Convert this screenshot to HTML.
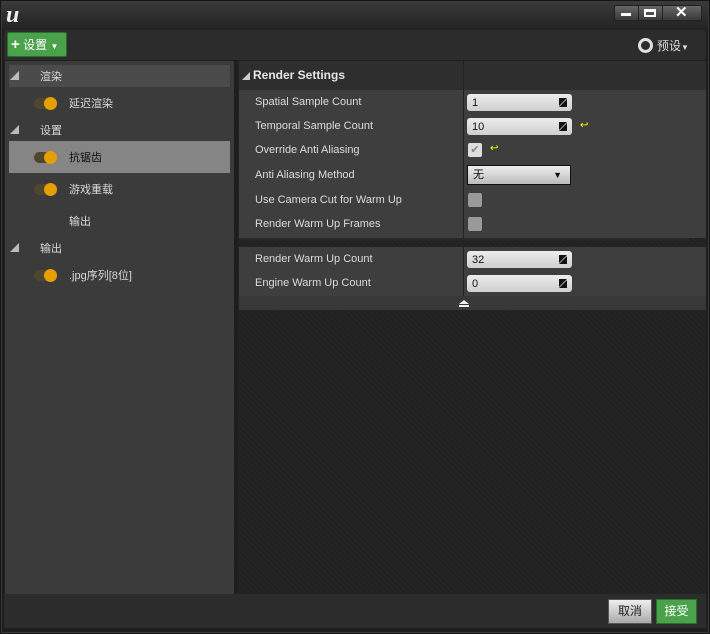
<!DOCTYPE html><html><head><meta charset="utf-8"><style>
*{margin:0;padding:0;box-sizing:border-box}
body{width:710px;height:634px;background:#151515;font-family:"Liberation Sans","Noto Sans CJK SC",sans-serif;font-size:11px;color:#d8d8d8;position:relative;overflow:hidden}
.a{position:absolute;white-space:nowrap}
.tog{position:absolute;width:22px;height:11px;border-radius:6px;background:#4f4630}
.tog:after{content:"";position:absolute;right:-1px;top:-1px;width:13px;height:13px;border-radius:50%;background:#e5a000}
.lbl{position:absolute;left:255px;color:#dcdcdc;white-space:nowrap}
.inp{position:absolute;left:467px;width:105px;height:17px;border-radius:3px;background:linear-gradient(#ececec,#cfcfcf);color:#111;padding-left:5px;line-height:18px}
.inp:after{content:"";position:absolute;right:5px;top:4px;width:0;height:0;border-top:4px solid #111;border-left:4px solid #111;border-right:4px solid transparent;border-bottom:4px solid transparent}
.inp:before{content:"";position:absolute;right:5px;top:5px;width:0;height:0;border-bottom:4px solid #111;border-right:4px solid #111;border-left:4px solid transparent;border-top:4px solid transparent}
.cb{position:absolute;left:468px;width:14px;height:14px;border-radius:2px;background:#9a9a9a}
.rst{position:absolute;color:#ff0;font-size:10px}
</style></head><body>
<div class="a" style="left:1px;top:1px;width:708px;height:632px;background:#1e1e1e;border:1px solid #3a3a3a"></div>
<div class="a" style="left:2px;top:2px;width:706px;height:28px;background:linear-gradient(#3a3a3a,#222)"></div>
<div class="a" style="left:6px;top:2px;font-family:'Liberation Serif',serif;font-size:24px;font-weight:bold;color:#eee;font-style:italic">u</div>
<div class="a" style="left:614px;top:5px;width:88px;height:16px;background:linear-gradient(#666,#3a3a3a);border:1px solid #222;border-radius:2px"></div>
<div class="a" style="left:638px;top:5px;width:1px;height:16px;background:#222"></div>
<div class="a" style="left:662px;top:5px;width:1px;height:16px;background:#222"></div>
<div class="a" style="left:621px;top:13px;width:10px;height:3px;background:#fff"></div>
<div class="a" style="left:644px;top:9px;width:12px;height:8px;border:2px solid #fff;border-top-width:3px"></div>
<div class="a" style="left:675px;top:3px;color:#fff;font-size:15px;font-weight:bold">✕</div>
<div class="a" style="left:4px;top:30px;width:702px;height:30px;background:#2c2c2c;border-radius:3px"></div>
<div class="a" style="left:7px;top:32px;width:60px;height:25px;background:#4aa24a;border:1px solid #2c6c2c;border-radius:2px;color:#fff;font-size:12px;line-height:23px;padding-left:3px"><b style="font-size:15px">+</b> 设置 <span style="font-size:8px">▼</span></div>
<div class="a" style="left:638px;top:38px;width:15px;height:15px;border-radius:50%;border:3px solid #e0e0e0"></div>
<div class="a" style="left:657px;top:37px;color:#ddd;font-size:12px">预设<span style="font-size:8px">▼</span></div>
<div class="a" style="left:5px;top:61px;width:229px;height:533px;background:#3b3b3b"></div>
<div class="a" style="left:9px;top:65px;width:221px;height:22px;background:#4b4b4b"></div>
<div class="a" style="left:10px;top:69px;color:#bbb;font-size:9px">◢</div><div class="a" style="left:40px;top:68px">渲染</div>
<div class="tog" style="left:34px;top:98px"></div><div class="a" style="left:69px;top:95px">延迟渲染</div>
<div class="a" style="left:10px;top:123px;color:#bbb;font-size:9px">◢</div><div class="a" style="left:40px;top:122px">设置</div>
<div class="a" style="left:9px;top:141px;width:221px;height:32px;background:#858585"></div>
<div class="tog" style="left:34px;top:152px"></div><div class="a" style="left:69px;top:149px;color:#111">抗锯齿</div>
<div class="tog" style="left:34px;top:184px"></div><div class="a" style="left:69px;top:181px">游戏重载</div>
<div class="a" style="left:69px;top:213px">输出</div>
<div class="a" style="left:10px;top:241px;color:#bbb;font-size:9px">◢</div><div class="a" style="left:40px;top:240px">输出</div>
<div class="tog" style="left:34px;top:270px"></div><div class="a" style="left:69px;top:267px">.jpg序列[8位]</div>
<div class="a" style="left:238px;top:61px;width:468px;height:533px;background:repeating-linear-gradient(45deg,#242424 0 2px,#212121 2px 4px)"></div>
<div class="a" style="left:239px;top:61px;width:467px;height:29px;background:#2e2e2e"></div>
<div class="a" style="left:242px;top:71px;color:#ccc;font-size:8px">◢</div>
<div class="a" style="left:253px;top:68px;font-size:12px;font-weight:bold;color:#e6e6e6">Render Settings</div>
<div class="a" style="left:239px;top:90px;width:467px;height:148px;background:#3e3e3e"></div>
<div class="a" style="left:239px;top:238px;width:450px;height:4px;background:linear-gradient(#2a2a2a,transparent)"></div>
<div class="a" style="left:239px;top:247px;width:467px;height:49px;background:#3e3e3e"></div>
<div class="a" style="left:239px;top:296px;width:467px;height:14px;background:#383838"></div>
<div class="a" style="left:459px;top:300px;width:10px;height:0;border-left:5px solid transparent;border-right:5px solid transparent;border-bottom:4px solid #eee"></div>
<div class="a" style="left:459px;top:305px;width:10px;height:2px;background:#eee"></div>
<div class="a" style="left:463px;top:61px;width:1px;height:177px;background:#222"></div>
<div class="a" style="left:463px;top:247px;width:1px;height:49px;background:#222"></div>
<div class="lbl" style="top:96px">Spatial Sample Count</div>
<div class="lbl" style="top:120px">Temporal Sample Count</div>
<div class="lbl" style="top:144px">Override Anti Aliasing</div>
<div class="lbl" style="top:169px">Anti Aliasing Method</div>
<div class="lbl" style="top:194px">Use Camera Cut for Warm Up</div>
<div class="lbl" style="top:218px">Render Warm Up Frames</div>
<div class="lbl" style="top:253px">Render Warm Up Count</div>
<div class="lbl" style="top:277px">Engine Warm Up Count</div>
<div class="inp" style="top:94px">1</div>
<div class="inp" style="top:118px">10</div>
<div class="rst" style="left:580px;top:120px">↩</div>
<div class="cb" style="top:143px;background:#ddd;color:#888;font-size:11px;text-align:center;line-height:14px">✔</div>
<div class="rst" style="left:490px;top:143px">↩</div>
<div class="a" style="left:467px;top:165px;width:104px;height:20px;border:1px solid #111;background:linear-gradient(#eee,#bbb);color:#111;padding-left:5px;line-height:19px">无<span style="position:absolute;right:8px;top:0;font-size:9px">▼</span></div>
<div class="cb" style="top:193px"></div>
<div class="cb" style="top:217px"></div>
<div class="inp" style="top:251px">32</div>
<div class="inp" style="top:275px">0</div>
<div class="a" style="left:4px;top:594px;width:702px;height:34px;background:#2c2c2c"></div>
<div class="a" style="left:608px;top:599px;width:44px;height:25px;background:linear-gradient(#eee,#aaa);border:1px solid #555;color:#222;font-size:12px;text-align:center;line-height:23px">取消</div>
<div class="a" style="left:656px;top:599px;width:41px;height:25px;background:#4aa24a;border:1px solid #2c6c2c;color:#fff;font-size:12px;text-align:center;line-height:23px">接受</div>
</body></html>
